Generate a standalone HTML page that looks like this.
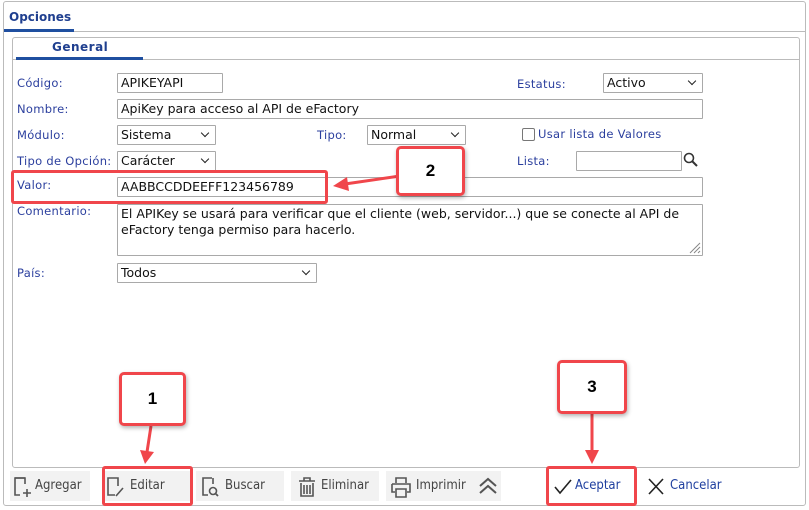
<!DOCTYPE html>
<html><head><meta charset="utf-8"><style>
*{box-sizing:border-box}
body{margin:0;width:809px;height:510px;background:#fff;font-family:Verdana,"DejaVu Sans",sans-serif;position:relative;overflow:hidden}
.a{position:absolute}
.lbl{position:absolute;font-size:11.5px;color:#2b3f9e;letter-spacing:0.3px}
.inp{position:absolute;border:1px solid #a9a9a9;height:20px;font-size:12.5px;color:#111;padding:1px 3px;background:#fff;border-radius:1px;white-space:nowrap;overflow:hidden}
.sel:after{content:"";position:absolute;right:7px;top:4px;width:5px;height:5px;border-right:1.5px solid #222;border-bottom:1.5px solid #222;transform:rotate(45deg)}
.red{position:absolute;border:3px solid #f0464b;border-radius:3px}
.num{position:absolute;border:3px solid #f0464b;border-radius:5px;background:#fff;font:bold 17px "Liberation Sans",Arial,sans-serif;text-align:center;box-shadow:1px 2px 4px rgba(0,0,0,.3)}
.btn{position:absolute;top:471px;height:30px;background:#f2f2f2;font:13px "DejaVu Sans Condensed","Liberation Sans",sans-serif;color:#444;line-height:30px}
</style></head><body>
<div class="a" style="left:3px;top:1px;width:803px;height:505px;border:1px solid #bbb;border-radius:3px"></div>
<div class="a" style="left:4px;top:31px;width:801px;border-top:1px solid #bbb"></div>
<div class="a" style="left:9px;top:10px;font:bold 12px Verdana,'DejaVu Sans',sans-serif;color:#1f3f8f">Opciones</div>
<div class="a" style="left:4px;top:29px;width:70px;height:3px;background:#1f4fa0"></div>
<div class="a" style="left:12px;top:37px;width:788px;height:431px;border:1px solid #bbb;border-radius:3px"></div>
<div class="a" style="left:13px;top:59px;width:786px;border-top:1px solid #bbb"></div>
<div class="a" style="left:52px;top:40px;font:bold 12px Verdana,'DejaVu Sans',sans-serif;color:#1f3f8f;letter-spacing:.5px">General</div>
<div class="a" style="left:16px;top:57px;width:127px;height:3px;background:#1f4fa0"></div>

<div class="lbl" style="left:17px;top:76px">Código:</div>
<div class="inp" style="left:117px;top:73px;width:106px">APIKEYAPI</div>
<div class="lbl" style="left:517px;top:77px">Estatus:</div>
<div class="inp sel" style="left:603px;top:73px;width:100px">Activo</div>

<div class="lbl" style="left:17px;top:102px">Nombre:</div>
<div class="inp" style="left:117px;top:99px;width:586px">ApiKey para acceso al API de eFactory</div>

<div class="lbl" style="left:17px;top:128px">Módulo:</div>
<div class="inp sel" style="left:117px;top:125px;width:99px">Sistema</div>
<div class="lbl" style="left:317px;top:128px">Tipo:</div>
<div class="inp sel" style="left:367px;top:125px;width:99px">Normal</div>
<div class="a" style="left:522px;top:128px;width:13px;height:13px;border:1.5px solid #777;border-radius:2px"></div>
<div class="lbl" style="left:538px;top:127px">Usar lista de Valores</div>

<div class="lbl" style="left:17px;top:154px">Tipo de Opción:</div>
<div class="inp sel" style="left:117px;top:151px;width:99px">Carácter</div>
<div class="lbl" style="left:517px;top:154px">Lista:</div>
<div class="inp" style="left:576px;top:151px;width:106px"></div>
<svg class="a" style="left:683px;top:152px" width="16" height="16"><circle cx="6" cy="6" r="4.5" fill="none" stroke="#333" stroke-width="1.6"/><line x1="9.5" y1="9.5" x2="14" y2="14" stroke="#333" stroke-width="2"/></svg>

<div class="lbl" style="left:17px;top:178px">Valor:</div>
<div class="inp" style="left:117px;top:177px;width:586px">AABBCCDDEEFF123456789</div>

<div class="lbl" style="left:17px;top:204px">Comentario:</div>
<div class="inp" style="left:117px;top:204px;width:586px;height:52px;white-space:normal;line-height:16px;padding-top:1px">El APIKey se usará para verificar que el cliente (web, servidor...) que se conecte al API de eFactory tenga permiso para hacerlo.</div>
<svg class="a" style="left:687px;top:240px" width="14" height="14"><path d="M13 3L3 13M13 7L7 13M13 11L11 13" stroke="#888" stroke-width="1"/></svg>

<div class="lbl" style="left:17px;top:266px">País:</div>
<div class="inp sel" style="left:117px;top:263px;width:200px">Todos</div>

<!-- buttons -->
<div class="btn" style="left:10px;width:80px"><svg class="a" style="left:2px;top:5px" width="22" height="22"><path d="M13 2H3V19H8" fill="none" stroke="#555" stroke-width="1.6"/><path d="M3 2H13V8" fill="none" stroke="#555" stroke-width="1.6"/><path d="M15 13V21M11 17H19" stroke="#555" stroke-width="1.6"/></svg><span class="a" style="left:25px">Agregar</span></div>
<div class="btn" style="left:102px;width:90px"><svg class="a" style="left:3px;top:5px" width="22" height="22"><path d="M12 2H3V19H10" fill="none" stroke="#555" stroke-width="1.6"/><path d="M12 2H13V10M11 20L18 12" fill="none" stroke="#555" stroke-width="1.6"/></svg><span class="a" style="left:28px">Editar</span></div>
<div class="btn" style="left:196px;width:88px"><svg class="a" style="left:4px;top:5px" width="22" height="22"><path d="M12 2H3V19H8M13 2V8" fill="none" stroke="#555" stroke-width="1.6"/><circle cx="13" cy="15" r="3.5" fill="none" stroke="#555" stroke-width="1.6"/><path d="M15.5 17.5L18 20" stroke="#555" stroke-width="1.8"/></svg><span class="a" style="left:29px">Buscar</span></div>
<div class="btn" style="left:291px;width:88px"><svg class="a" style="left:6px;top:5px" width="20" height="22"><path d="M2 5H18M7 5V2H13V5M4 7V20H16V7M7 9V18M10 9V18M13 9V18" fill="none" stroke="#555" stroke-width="1.6"/></svg><span class="a" style="left:30px">Eliminar</span></div>
<div class="btn" style="left:386px;width:90px"><svg class="a" style="left:4px;top:5px" width="22" height="22"><path d="M6 7V2H16V7M2 8H20V16H17M5 16H2V8M6 13H16V21H6Z" fill="none" stroke="#555" stroke-width="1.6"/></svg><span class="a" style="left:30px">Imprimir</span></div>
<div class="btn" style="left:474px;width:27px"><svg class="a" style="left:3px;top:6px" width="22" height="18"><path d="M3 9L11 2L19 9M3 16L11 9L19 16" fill="none" stroke="#555" stroke-width="2"/></svg></div>
<div class="btn" style="left:550px;width:84px;background:#fff;color:#1f3f9f"><svg class="a" style="left:4px;top:8px" width="18" height="16"><path d="M1 8L6 14L17 1" fill="none" stroke="#222" stroke-width="1.6"/></svg><span class="a" style="left:25px">Aceptar</span></div>
<div class="btn" style="left:645px;width:90px;background:#fff;color:#1f3f9f"><svg class="a" style="left:3px;top:7px" width="16" height="17"><path d="M1 1L15 16M15 1L1 16" stroke="#222" stroke-width="1.6"/></svg><span class="a" style="left:25px">Cancelar</span></div>

<!-- annotations -->
<div class="red" style="left:11px;top:170px;width:317px;height:34px"></div>
<div class="red" style="left:102px;top:466px;width:91px;height:40px"></div>
<div class="red" style="left:546px;top:466px;width:91px;height:40px"></div>
<svg class="a" style="left:0;top:0" width="809" height="510">
<path d="M400 176L345 184" stroke="#f0464b" stroke-width="3"/><path d="M333 186L347 177L349 191Z" fill="#f0464b"/>
<path d="M151 426L147 452" stroke="#f0464b" stroke-width="3"/><path d="M145 464L140 450L154 452Z" fill="#f0464b"/>
<path d="M592 412V452" stroke="#f0464b" stroke-width="3"/><path d="M592 464L585 450H599Z" fill="#f0464b"/>
</svg>
<div class="num" style="left:396px;top:146px;width:69px;height:50px;line-height:44px">2</div>
<div class="num" style="left:119px;top:372px;width:67px;height:54px;line-height:48px">1</div>
<div class="num" style="left:557px;top:360px;width:70px;height:54px;line-height:48px">3</div>
</body></html>
